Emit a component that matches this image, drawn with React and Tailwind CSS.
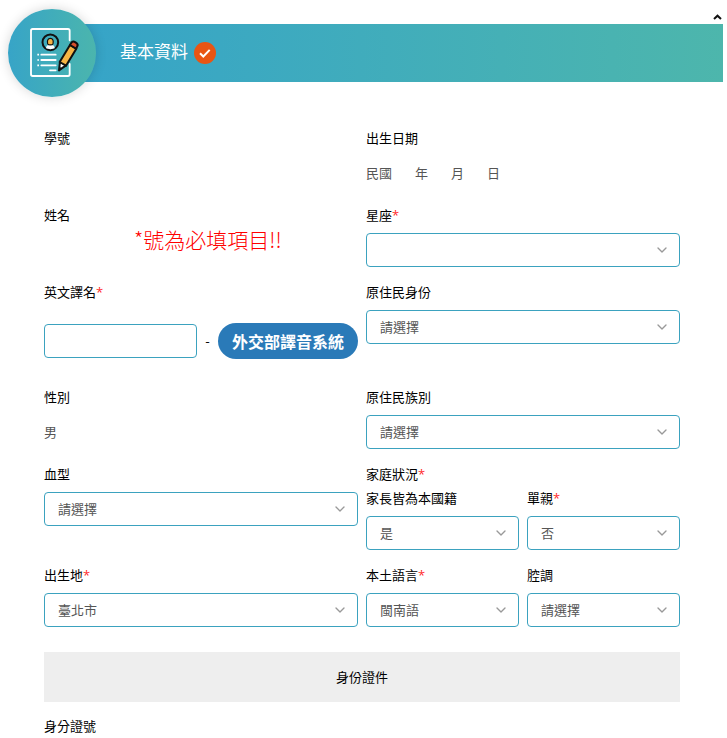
import { FiChevronDown } from "react-icons/fi";

const Required = () => (
    <span className="font-['Open_Sans',sans-serif] text-[#ff2a2a]">*</span>
);

const Label = ({ htmlFor, required, children }) => {
    const Tag = htmlFor ? "label" : "div";
    return (
        <Tag htmlFor={htmlFor} className="block h-6 leading-6 text-black">
            {children}
            {required && <Required />}
        </Tag>
    );
};

const SelectField = ({ id, label, required, options }) => {
    return (
        <div className="min-w-0">
            <Label htmlFor={id} required={required}>{label}</Label>
            <div className="relative mt-[6px]">
                <select
                    id={id}
                    className="block w-full h-[34px] appearance-none rounded-[4px] border border-[#3ba2bf] bg-white pl-[13px] pr-8 text-[#555] outline-none"
                >
                    {options.map((option) => (
                        <option key={option}>{option}</option>
                    ))}
                </select>
                <FiChevronDown
                    className="pointer-events-none absolute right-[10px] top-[9px] text-[#999]"
                    size={16}
                />
            </div>
        </div>
    );
};

const ProfileIcon = () => (
    <svg viewBox="24 26 264 264" className="size-[88px]" fill="none" aria-hidden="true">
        {/* sheet */}
        <path
            d="M209 120V91q0-5-5-5H98q-5 0-5 5v131q0 5 5 5h106q5 0 5-5v-31"
            stroke="#fff"
            strokeWidth="5.5"
            strokeLinecap="round"
        />
        {/* avatar */}
        <circle cx="151" cy="126" r="23.5" stroke="#111" strokeWidth="6" />
        <path d="M138 144c0-8 5-11 13-11s13 3 13 11q-13 5-26 0z" fill="#fff" />
        <path d="M143 130c-2-8 0-16 8-16s10 8 8 16c-2 5-14 5-16 0z" fill="#f6b445" stroke="#111" strokeWidth="3.5" />
        {/* text lines */}
        <path
            d="M124 163h43M124 179h43M124 195h43M150 210h17"
            stroke="#fff"
            strokeWidth="5.5"
            strokeLinecap="round"
        />
        <path d="M112 163h5M112 179h5M112 195h5" stroke="#fff" strokeWidth="5" />
        {/* pencil */}
        <g stroke="#111" strokeWidth="6" strokeLinejoin="round">
            <path d="M177 210l3-26 18 11z" fill="#fff" />
            <path d="M179 185l31-51 19 11-31 51z" fill="#f6b445" />
            <path d="M210 134l4-7c5-8 23 2 18 11l-4 7z" fill="#d9502c" />
        </g>
        <path d="M177 210l1-11 8 5z" fill="#111" />
    </svg>
);

const CheckBadge = () => (
    <svg viewBox="0 0 22 22" className="size-[22px]" fill="none" aria-hidden="true">
        <circle cx="11" cy="11" r="11" fill="#e95513" />
        <path d="M6 11.2l3.3 3.3 6.4-6.6" stroke="#fff" strokeWidth="2" />
    </svg>
);

const SectionHeader = () => {
    return (
        <header>
            <div className="flex h-6 items-center justify-end pt-[10px] pr-[5px]">
                <button type="button" aria-label="收合">
                    <svg viewBox="0 0 9 6" className="w-[9px] h-[6px]" fill="none">
                        <path d="M1 5l3.5-3.3L8 5" stroke="#111" strokeWidth="2" />
                    </svg>
                </button>
            </div>
            <div className="ml-12 mr-1 flex h-[58px] items-center bg-linear-to-r from-[#35a3c9] to-[#4db6ac]">
                <div className="-ml-10 -my-4 shrink-0 rounded-full bg-linear-to-r from-[#37a4c7] to-[#4bb5ad] shadow-[0_0_12px_rgba(0,0,0,0.16)]">
                    <ProfileIcon />
                </div>
                <h2 className="ml-6 mr-[6px] pb-1 text-[17px] font-normal text-white">基本資料</h2>
                <CheckBadge />
            </div>
        </header>
    );
};

const App = () => {
    return (
        <main className="bg-white font-['Noto_Sans_CJK_TC',sans-serif] text-[13px] font-normal text-[#555]">
            <SectionHeader />
            <form className="mt-11 pl-11 pr-[47px]">
                <div className="grid grid-cols-2 gap-x-2 gap-y-[13px]">
                    <div>
                        <Label>學號</Label>
                    </div>
                    <div>
                        <Label>出生日期</Label>
                        <div className="mt-[6px] flex h-[34px] items-center gap-[23px]">
                            <span>民國</span>
                            <span>年</span>
                            <span>月</span>
                            <span>日</span>
                        </div>
                    </div>

                    <div>
                        <Label>姓名</Label>
                        <p className="pl-[90px] text-[21px] font-light leading-6 text-[#ff0000]">*號為必填項目!!</p>
                    </div>
                    <SelectField id="zodiac" label="星座" required options={[""]} />

                    <div className="pb-[13px]">
                        <Label htmlFor="english-name" required>英文譯名</Label>
                        <div className="mt-[19px] flex items-center justify-between">
                            <input
                                id="english-name"
                                type="text"
                                className="h-[34px] w-[153px] min-w-0 rounded-[4px] border border-[#3ba2bf] px-[13px] outline-none"
                            />
                            <span className="text-black">-</span>
                            <button
                                type="button"
                                className="h-9 shrink-0 whitespace-nowrap rounded-full bg-[#2a7ab8] px-[14px] text-[16px] font-bold text-white"
                            >
                                外交部譯音系統
                            </button>
                        </div>
                    </div>
                    <SelectField id="indigenous-status" label="原住民身份" options={["請選擇"]} />

                    <div>
                        <Label>性別</Label>
                        <div className="mt-[6px] flex h-[34px] items-center">男</div>
                    </div>
                    <SelectField id="indigenous-tribe" label="原住民族別" options={["請選擇"]} />

                    <SelectField id="blood-type" label="血型" options={["請選擇"]} />
                    <div>
                        <Label required>家庭狀況</Label>
                        <div className="grid grid-cols-2 gap-2">
                            <SelectField id="parents-native" label="家長皆為本國籍" options={["是", "否"]} />
                            <SelectField id="single-parent" label="單親" required options={["否", "是"]} />
                        </div>
                    </div>

                    <SelectField id="birthplace" label="出生地" required options={["臺北市"]} />
                    <div className="grid grid-cols-2 gap-2">
                        <SelectField id="native-language" label="本土語言" required options={["閩南語"]} />
                        <SelectField id="accent" label="腔調" options={["請選擇"]} />
                    </div>
                </div>

                <h3 className="mt-[25px] mb-3 bg-[#eee] text-center leading-[50px] text-black">身份證件</h3>
                <Label>身分證號</Label>
            </form>
        </main>
    );
};

export default App;
